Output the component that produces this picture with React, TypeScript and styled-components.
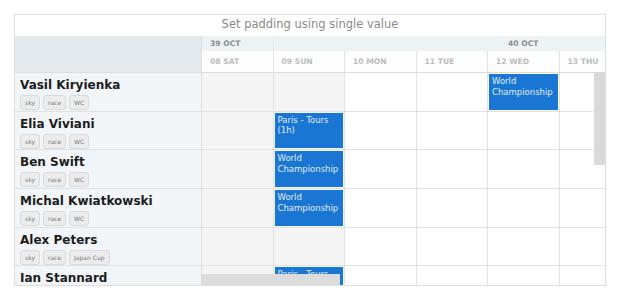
import styled, { createGlobalStyle } from "styled-components";

const GlobalStyle = createGlobalStyle`
  html, body {
    margin: 0;
    padding: 0;
    background: #ffffff;
  }
  * {
    box-sizing: border-box;
  }
`;

interface Resource {
  name: string;
  tags: string[];
  events: { [day: number]: string };
}

const days = ["08 SAT", "09 SUN", "10 MON", "11 TUE", "12 WED", "13 THU"];
const weekend = [0, 1];

const resources: Resource[] = [
  { name: "Vasil Kiryienka", tags: ["sky", "race", "WC"], events: { 4: "World Championship" } },
  { name: "Elia Viviani", tags: ["sky", "race", "WC"], events: { 1: "Paris - Tours (1h)" } },
  { name: "Ben Swift", tags: ["sky", "race", "WC"], events: { 1: "World Championship" } },
  { name: "Michal Kwiatkowski", tags: ["sky", "race", "WC"], events: { 1: "World Championship" } },
  { name: "Alex Peters", tags: ["sky", "race", "Japan Cup"], events: {} },
  { name: "Ian Stannard", tags: [], events: { 1: "Paris - Tours" } },
];

const COL = 71.5;

const App = (): JSX.Element => {
  return (
    <>
      <GlobalStyle />
      <Panel>
        <Title>Set padding using single value</Title>
        <Grid>
          <Corner />
          <WeekRow>
            <WeekCell span={1} align="left">39 OCT</WeekCell>
            <WeekCell span={7} align="center">40 OCT</WeekCell>
          </WeekRow>
          {days.map((d) => (
            <DayCell key={d}>{d}</DayCell>
          ))}
          {resources.map((r) => (
            <Row key={r.name}>
              <NameCell>
                <Name>{r.name}</Name>
                <Tags>
                  {r.tags.map((t) => (
                    <Tag key={t}>{t}</Tag>
                  ))}
                </Tags>
              </NameCell>
              {days.map((d, i) => (
                <Cell key={d} weekend={weekend.includes(i)}>
                  {r.events[i] && <Event>{r.events[i]}</Event>}
                </Cell>
              ))}
            </Row>
          ))}
        </Grid>
        <VScroll />
        <HScroll />
      </Panel>
    </>
  );
};

export default App;

const Panel = styled.div`
  position: relative;
  margin: 14px 0 0 14px;
  width: 592px;
  height: 272px;
  border: 1px solid #dedede;
  box-shadow: 0 0 2px rgba(0, 0, 0, 0.06);
  overflow: hidden;
  font-family: "DejaVu Sans", "Liberation Sans", sans-serif;
  background: #ffffff;
`;

const Title = styled.div`
  height: 21px;
  line-height: 18px;
  text-align: center;
  font-size: 11.5px;
  color: #8a8a8a;
`;

const Grid = styled.div`
  display: grid;
  grid-template-columns: 187px repeat(6, ${COL}px);
  grid-template-rows: 15px 22px;
  grid-auto-rows: 38.7px;
`;

const Corner = styled.div`
  grid-row: 1 / span 2;
  background: #e4e9ed;
  border-right: 1px solid #dcdfe2;
  border-bottom: 1px solid #dcdfe2;
`;

const WeekRow = styled.div`
  grid-column: 2 / -1;
  display: flex;
  overflow: hidden;
  background: #edf2f5;
`;

const WeekCell = styled.div<{ span: number; align: string }>`
  flex: 0 0 ${(p) => p.span * COL}px;
  border-right: 1px solid #e2e6e9;
  font-size: 7.6px;
  font-weight: bold;
  color: #8d8d8d;
  line-height: 15px;
  padding: 0 8px;
  text-align: ${(p) => p.align};
`;

const DayCell = styled.div`
  border-right: 1px solid #e3e3e3;
  border-bottom: 1px solid #dcdcdc;
  font-size: 7.6px;
  font-weight: bold;
  color: #bcbcbc;
  line-height: 21px;
  padding: 0 8px;
  background: #fdfdfd;
  white-space: nowrap;
`;

const Row = styled.div`
  display: contents;
`;

const NameCell = styled.div`
  background: #f1f5f8;
  border-right: 1px solid #dcdfe2;
  border-bottom: 1px solid #dde1e4;
  padding: 4px 5px;
  overflow: hidden;
`;

const Name = styled.div`
  font-size: 12px;
  font-weight: bold;
  color: #1c1c1c;
  line-height: 16px;
`;

const Tags = styled.div`
  display: flex;
  gap: 3px;
  margin-top: 2px;
`;

const Tag = styled.span`
  display: inline-block;
  font-size: 6px;
  line-height: 13px;
  height: 15px;
  padding: 0 4px;
  color: #777777;
  background: #ececec;
  border: 1px solid #dadada;
  border-radius: 3px;
`;

const Cell = styled.div<{ weekend: boolean }>`
  display: flex;
  padding: 1px;
  background: ${(p) => (p.weekend ? "#f4f4f4" : "#ffffff")};
  border-right: 1px solid #e2e2e2;
  border-bottom: 1px solid #e2e2e2;
  overflow: hidden;
`;

const Event = styled.div`
  flex: 1;
  background: #1976d2;
  color: #e3ecf8;
  font-size: 8.5px;
  line-height: 10.5px;
  padding: 2px 3px;
  overflow: hidden;
`;

const VScroll = styled.div`
  position: absolute;
  right: 0;
  top: 57px;
  width: 11px;
  height: 93px;
  background: #d9d9d9;
`;

const HScroll = styled.div`
  position: absolute;
  left: 186px;
  bottom: 0;
  width: 139px;
  height: 11px;
  background: #dcdcdc;
`;
